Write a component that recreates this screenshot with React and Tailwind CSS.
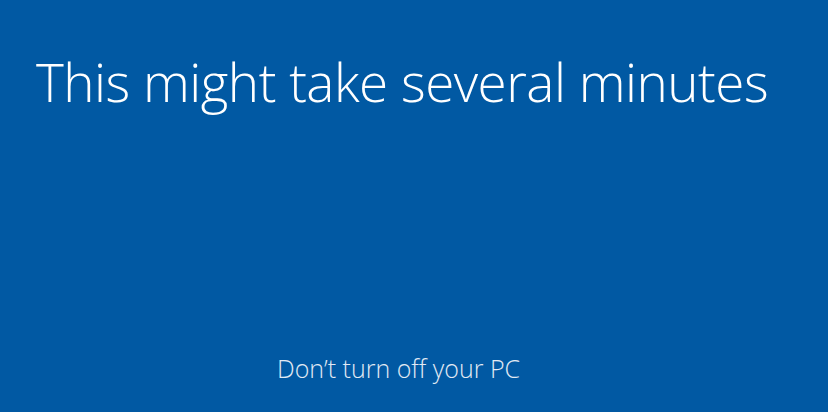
export default function App() {
  return (
    <div className="w-[828px] h-[412px] bg-[#0159a3] overflow-hidden flex flex-col text-white font-['Open_Sans',sans-serif]">
      <div className="pt-[44px] pl-[36px]">
        <h1 className="text-[53px] font-light leading-[76px] tracking-[-0.5px]">This might take several minutes</h1>
      </div>
      <div className="flex-1" />
      <div className="pb-[29px] pl-[277px]">
        <p className="text-[25px] font-light leading-[30px] text-[#e2eaf4]">Don’t turn off your PC</p>
      </div>
    </div>
  );
}
